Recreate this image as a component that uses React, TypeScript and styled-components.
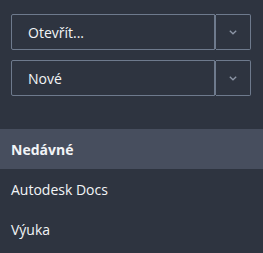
import React from 'react';
import styled, { createGlobalStyle } from 'styled-components';

const GlobalStyle = createGlobalStyle`
  html, body {
    margin: 0;
    padding: 0;
    background: #2e3440;
  }
  body {
    font-family: 'Open Sans', 'Noto Sans', sans-serif;
  }
`;

const Panel = styled.div`
  width: 263px;
  height: 253px;
  background: #2e3440;
  display: flex;
  flex-direction: column;
  padding-top: 14px;
  box-sizing: border-box;
`;

const Buttons = styled.div`
  display: flex;
  flex-direction: column;
  gap: 10px;
  padding: 0 12px 0 11px;
`;

const SplitButton = styled.div`
  display: flex;
  height: 36px;
`;

const MainButton = styled.button`
  flex: 1;
  background: transparent;
  border: 1px solid #6e7a8d;
  border-radius: 2px 0 0 2px;
  color: #f2f4f7;
  font-family: 'Open Sans', 'Noto Sans', sans-serif;
  font-size: 14px;
  text-align: left;
  padding: 0 0 0 16px;
`;

const ArrowButton = styled.button`
  width: 35px;
  background: transparent;
  border: 1px solid #6e7a8d;
  border-left: none;
  margin-left: 1px;
  border-radius: 0 2px 2px 0;
  display: flex;
  align-items: center;
  justify-content: center;
  padding: 0;
  position: relative;
  &::before {
    content: '';
    position: absolute;
    left: -1px;
    top: 0;
    bottom: 0;
    border-left: 1px solid #6e7a8d;
  }
`;

const Nav = styled.nav`
  margin-top: 33px;
  display: flex;
  flex-direction: column;
`;

const NavItem = styled.div<{ $active?: boolean }>`
  height: 40px;
  display: flex;
  align-items: center;
  padding-left: 11px;
  font-size: 14px;
  color: #f2f4f7;
  font-weight: ${(p) => (p.$active ? 700 : 400)};
  background: ${(p) => (p.$active ? '#474e5e' : 'transparent')};
`;

const Chevron = () => (
  <svg width="8" height="5" viewBox="0 0 8 5">
    <path d="M0.8 0.8 L4 3.8 L7.2 0.8" fill="none" stroke="#8d96a6" strokeWidth="1.3" />
  </svg>
);

export default function App() {
  return (
    <>
      <GlobalStyle />
      <Panel>
        <Buttons>
          <SplitButton>
            <MainButton>Otevřít...</MainButton>
            <ArrowButton>
              <Chevron />
            </ArrowButton>
          </SplitButton>
          <SplitButton>
            <MainButton>Nové</MainButton>
            <ArrowButton>
              <Chevron />
            </ArrowButton>
          </SplitButton>
        </Buttons>
        <Nav>
          <NavItem $active>Nedávné</NavItem>
          <NavItem>Autodesk Docs</NavItem>
          <NavItem>Výuka</NavItem>
        </Nav>
      </Panel>
    </>
  );
}
